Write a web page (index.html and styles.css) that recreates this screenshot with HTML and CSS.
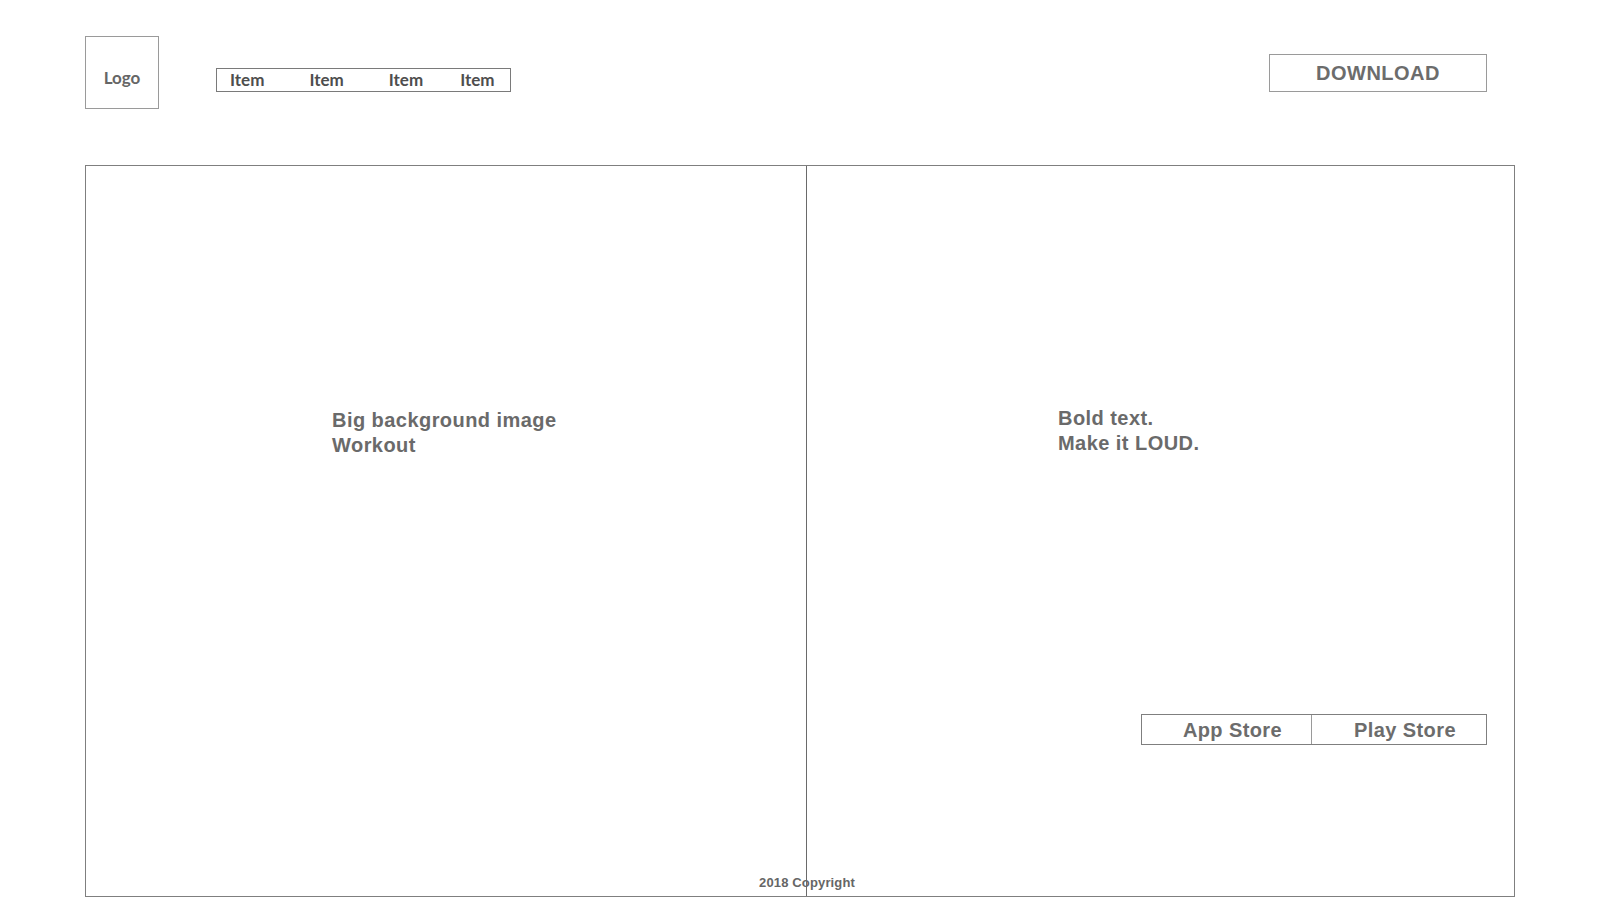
FILE: index.html
```html
<!DOCTYPE html>
<html lang="en">
<head>
<meta charset="utf-8">
<title>Workout landing wireframe</title>
<link rel="stylesheet" href="styles.css">
</head>
<body>
<header class="header">
  <div class="logo">Logo</div>
  <nav class="nav">
    <span class="nav-item">Item</span>
    <span class="nav-item">Item</span>
    <span class="nav-item">Item</span>
    <span class="nav-item">Item</span>
  </nav>
  <div class="download">DOWNLOAD</div>
</header>
<main class="main">
  <section class="pane pane-left">
    <p class="big-text">Big background image<br>Workout</p>
  </section>
  <section class="pane pane-right">
    <p class="big-text loud">Bold text.<br>Make it LOUD.</p>
    <div class="stores">
      <div class="store store-app">App Store</div>
      <div class="store store-play">Play Store</div>
    </div>
  </section>
  <footer class="copyright">2018 Copyright</footer>
</main>
</body>
</html>
```

FILE: styles.css
```css
* { box-sizing: border-box; }

html, body {
  margin: 0;
  padding: 0;
  background: #fff;
}

body {
  width: 1600px;
  height: 897px;
  overflow: hidden;
  font-family: "Liberation Sans", Arial, sans-serif;
  color: #6c6c6c;
}

.header {
  display: flex;
  align-items: flex-start;
  padding: 36px 113px 0 85px;
  height: 165px;
}

.logo {
  width: 74px;
  height: 73px;
  border: 1px solid #9a9a9a;
  display: flex;
  align-items: center;
  justify-content: center;
  padding-top: 10px;
  font-family: Lato, "Open Sans", sans-serif;
  font-weight: 700;
  font-size: 17px;
  color: #666;
}

.nav {
  margin-left: 57px;
  margin-top: 32px;
  width: 295px;
  height: 24px;
  border: 1px solid #7a7a7a;
  display: flex;
  align-items: center;
  padding: 0 0 2px 13px;
}

.nav-item {
  font-family: Lato, "Open Sans", sans-serif;
  font-weight: 700;
  font-size: 17px;
  color: #4e4e4e;
  line-height: 1;
  margin-right: 45px;
}

.nav-item:nth-child(3) {
  margin-right: 37px;
}

.download {
  margin-left: auto;
  margin-top: 18px;
  width: 218px;
  height: 38px;
  border: 1px solid #9a9a9a;
  display: flex;
  align-items: center;
  justify-content: center;
  font-weight: 700;
  font-size: 20px;
  letter-spacing: 0.5px;
  color: #6c6c6c;
}

.main {
  position: relative;
  margin-left: 85px;
  width: 1430px;
  height: 732px;
  border: 1px solid #7f7f7f;
  display: grid;
  grid-template-columns: 720px 1fr;
}

.pane {
  min-height: 0;
}

.pane-left {
  padding: 242px 0 0 246px;
}

.pane-right {
  position: relative;
  z-index: 1;
  border-left: 1px solid #6a6a6a;
  padding: 240px 0 0 251px;
  display: flex;
  flex-direction: column;
}

.big-text {
  margin: 0;
  font-weight: 700;
  font-size: 20px;
  line-height: 25px;
  letter-spacing: 0.45px;
  color: #6a6a6a;
}

.stores {
  margin-top: 258px;
  align-self: flex-end;
  margin-right: 27px;
  width: 346px;
  height: 31px;
  border: 1px solid #7f7f7f;
  display: flex;
}

.store {
  display: flex;
  align-items: center;
  justify-content: center;
  padding-left: 12px;
  padding-top: 1px;
  font-weight: 700;
  font-size: 20px;
  letter-spacing: 0.4px;
  color: #6c6c6c;
}

.store-app {
  width: 169px;
}

.store-play {
  flex: 1;
  border-left: 1px solid #9a9a9a;
}

.copyright {
  position: absolute;
  left: 673px;
  bottom: 6px;
  font-weight: 700;
  font-size: 13px;
  line-height: 15px;
  letter-spacing: 0.15px;
  color: #666;
}
```
